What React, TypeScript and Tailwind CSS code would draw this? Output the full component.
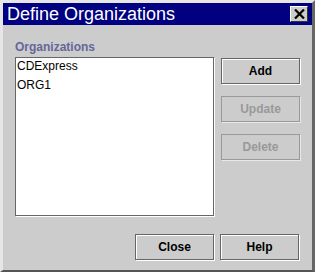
import React from 'react'

const font = { fontFamily: '"Liberation Sans", Arial, sans-serif' }

function Btn({ label, disabled = false }: { label: string; disabled?: boolean }) {
  return (
    <button
      className={
        disabled
          ? 'w-[79px] h-[26px] border border-[#999999] shadow-[1px_1px_0_#e8e8e8] bg-[#cccccc] text-[12px] font-bold text-[#999999] leading-none'
          : 'w-[79px] h-[26px] border border-[#666666] shadow-[inset_1px_1px_0_#ffffff,1px_1px_0_#ffffff] bg-[#cccccc] text-[12px] font-bold text-black leading-none'
      }
    >
      {label}
    </button>
  )
}

export default function App() {
  const orgs = ['CDExpress', 'ORG1']
  return (
    <div
      style={font}
      className="w-[315px] h-[272px] bg-[#cccccc] border-t-[3px] border-l-[3px] border-r-[3px] border-b-[2px] border-t-[#e6e6e6] border-l-[#e6e6e6] border-r-[#666666] border-b-[#555555] flex flex-col select-none"
    >
      {/* title bar */}
      <div className="h-[22px] bg-[#000080] flex items-center justify-between pl-[4px] pr-[4px]">
        <span className="text-white text-[18px] leading-none">Define Organizations</span>
        <div className="w-[18px] h-[16px] bg-[#cccccc] border border-t-white border-l-white border-r-[#333333] border-b-[#333333] flex items-center justify-center">
          <svg width="11" height="10" viewBox="0 0 11 10">
            <path d="M1 0.5 L10 9.5 M10 0.5 L1 9.5" stroke="#000" strokeWidth="2.2" />
          </svg>
        </div>
      </div>

      {/* body */}
      <div className="flex-1 flex flex-col px-[12px]">
        <div className="flex mt-[14px]">
          <div className="flex flex-col">
            <div className="text-[12px] font-bold text-[#666699] h-[16px] leading-[16px]">Organizations</div>
            <div className="w-[199px] h-[159px] mt-[2px] bg-white border border-[#666666] shadow-[1px_1px_0_#ffffff]">
              {orgs.map((o) => (
                <div key={o} className="h-[19px] leading-[17px] pl-[1px] text-[12px] text-black">
                  {o}
                </div>
              ))}
            </div>
          </div>
          <div className="flex flex-col gap-[12px] ml-[7px] pt-[19px]">
            <Btn label="Add" />
            <Btn label="Update" disabled />
            <Btn label="Delete" disabled />
          </div>
        </div>
        <div className="flex justify-end gap-[6px] mt-[18px] pr-[1px]">
          <Btn label="Close" />
          <Btn label="Help" />
        </div>
      </div>
    </div>
  )
}
